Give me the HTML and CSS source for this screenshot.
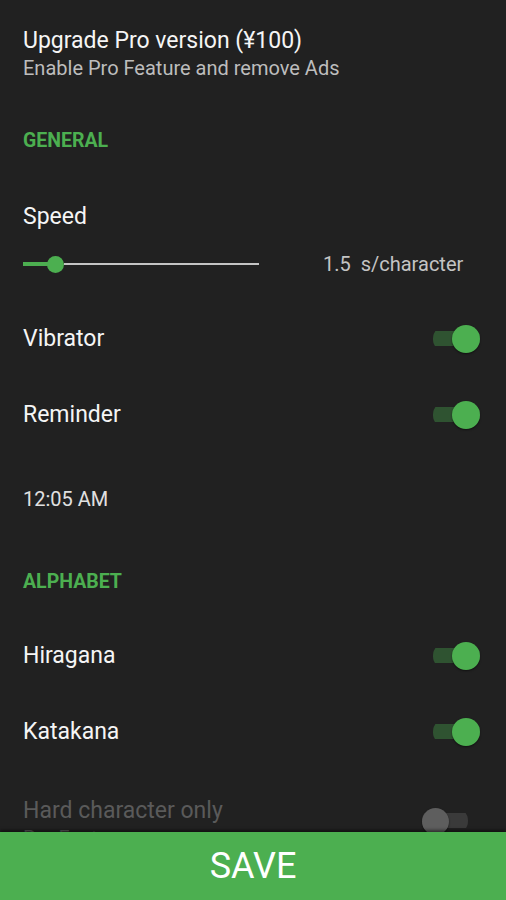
FILE: index.html
```html
<!DOCTYPE html>
<html lang="en">

<head>
    <meta charset="UTF-8">
    <meta name="viewport" content="width=device-width, initial-scale=1.0">
    <title>Settings</title>
    <link rel="stylesheet" href="styles.css">
</head>

<body>
    <div class="content">
        <div class="pro">
            <div class="title">Upgrade Pro version (¥100)</div>
            <div class="summary">Enable Pro Feature and remove Ads</div>
        </div>

        <div class="category cat-general">GENERAL</div>

        <div class="speed-label title">Speed</div>
        <div class="slider-row">
            <div class="slider">
                <div class="slider-active"></div>
                <div class="slider-thumb"></div>
                <div class="slider-rest"></div>
            </div>
            <div class="slider-value">1.5&nbsp; s/character</div>
        </div>

        <div class="row">
            <div class="title">Vibrator</div>
            <div class="switch on"><div class="knob"></div></div>
        </div>
        <div class="row">
            <div class="title">Reminder</div>
            <div class="switch on"><div class="knob"></div></div>
        </div>
        <div class="time-row">12:05 AM</div>

        <div class="category cat-alphabet">ALPHABET</div>

        <div class="row">
            <div class="title">Hiragana</div>
            <div class="switch on"><div class="knob"></div></div>
        </div>
        <div class="row">
            <div class="title">Katakana</div>
            <div class="switch on"><div class="knob"></div></div>
        </div>
        <div class="row disabled">
            <div class="text">
                <div class="title">Hard character only</div>
                <div class="summary">Pro Feature</div>
            </div>
            <div class="switch off"><div class="knob"></div></div>
        </div>
    </div>

    <button class="save">SAVE</button>
</body>

</html>
```

FILE: styles.css
```css
html, body {
    margin: 0;
    height: 900px;
    background-color: #212121;
    font-family: Roboto, "Noto Sans", sans-serif;
    color: #f5f5f5;
}

body {
    display: flex;
    flex-direction: column;
    overflow: hidden;
}

.content {
    flex: 1;
    overflow: hidden;
    padding: 0 26px 0 23px;
}

.title {
    font-size: 23px;
    line-height: 24px;
}

.summary {
    font-size: 20px;
    line-height: 22px;
    color: #bdbdbd;
}

.pro {
    padding-top: 29px;
}

.pro .summary {
    margin-top: 4px;
}

.category {
    height: 56px;
    line-height: 56px;
    font-size: 19.5px;
    font-weight: bold;
    color: #4caf50;
}

.cat-general {
    margin-top: 34px;
}

.cat-alphabet {
    margin-top: 9px;
    margin-bottom: 8px;
}

.speed-label {
    margin-top: 36px;
}

.slider-row {
    margin: 23px 0 25px;
    height: 24px;
    display: flex;
    align-items: center;
}

.slider {
    width: 236px;
    display: flex;
    align-items: center;
}

.slider-active {
    width: 25px;
    height: 4px;
    background-color: #4caf50;
}

.slider-thumb {
    width: 17px;
    height: 17px;
    border-radius: 50%;
    background-color: #4caf50;
    margin-left: -1px;
}

.slider-rest {
    flex: 1;
    height: 2px;
    background-color: #c4c4c4;
}

.slider-value {
    margin-left: 64px;
    font-size: 20px;
    color: #c4c4c4;
}

.row {
    height: 76px;
    display: flex;
    align-items: center;
    justify-content: space-between;
}

.time-row {
    height: 92px;
    line-height: 92px;
    font-size: 20px;
    color: #e0e0e0;
}

.switch {
    width: 44px;
    height: 28px;
    display: flex;
    align-items: center;
    background: linear-gradient(#0000 6px, var(--track) 6px, var(--track) 21px, #0000 21px);
    border-radius: 14px;
}

.switch.on {
    --track: #2f5331;
    justify-content: flex-end;
    width: 47px;
}

.switch.off {
    --track: #3a3a3a;
    width: 46px;
    margin-right: 12px;
}

.knob {
    width: 28px;
    height: 28px;
    border-radius: 50%;
    background-color: #4caf50;
    box-shadow: 0 1px 2px rgba(0, 0, 0, 0.5);
}

.switch.off .knob {
    width: 27px;
    height: 27px;
    background-color: #5e5e5e;
}

.disabled {
    height: auto;
    padding-top: 29px;
    align-items: flex-start;
}

.disabled .title,
.disabled .summary {
    color: #5a5a5a;
}

.disabled .summary {
    margin-top: 4px;
}

.disabled .switch {
    margin-top: 8px;
}

.save {
    flex: none;
    height: 68px;
    border: none;
    background-color: #4caf50;
    color: #fff;
    font-family: Roboto, "Noto Sans", sans-serif;
    font-size: 36px;
    box-shadow: 0 -2px 3px rgba(0, 0, 0, 0.5);
}
```
